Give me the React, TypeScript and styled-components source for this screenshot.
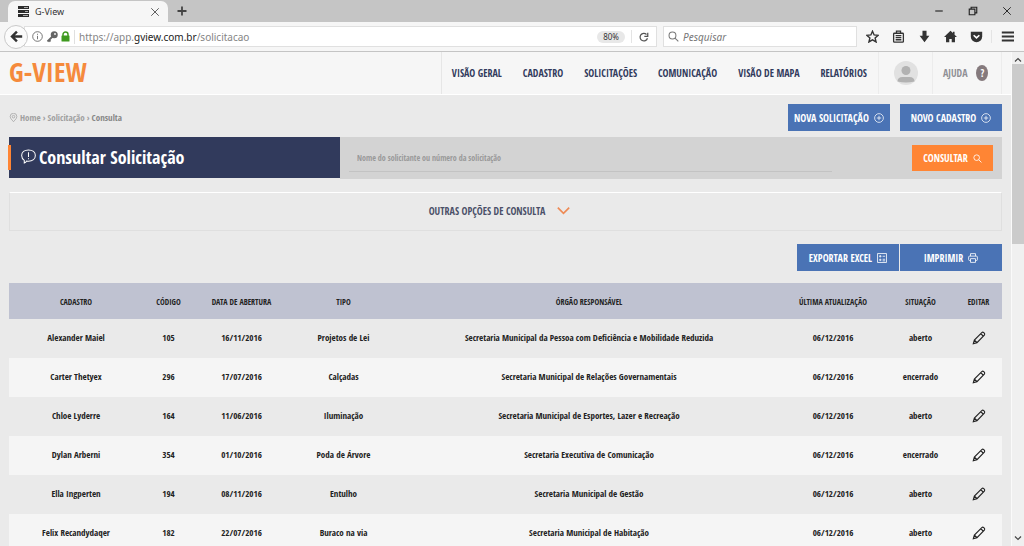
import React from 'react';
import styled, { createGlobalStyle } from 'styled-components';

const ui = '"Noto Sans", "Open Sans", sans-serif';
const body = '"Open Sans Condensed", "Open Sans", sans-serif';

const color = {
  navy: '#313a5c',
  blue: '#4a73b5',
  orange: '#ff8534',
  page: '#eaeaea',
  bar: '#f6f6f6',
};

const Global = createGlobalStyle`
  *, *::before, *::after { box-sizing: border-box; }
  body { margin: 0; background: ${color.page}; font-family: ${body}; }
  button, input { font-family: inherit; }
  button { border: 0; padding: 0; margin: 0; background: none; cursor: pointer; }
  a { color: inherit; text-decoration: none; }
  svg { display: block; flex: none; }
`;

const Window = styled.div`
  display: flex;
  flex-direction: column;
  height: 100vh;
  overflow: hidden;
`;

const TabStrip = styled.div`
  display: flex;
  flex: none;
  height: 22px;
  background: #c5c5c5;
  font-family: ${ui};
  padding-left: 8px;
`;

const Tab = styled.div`
  display: flex;
  align-items: center;
  width: 160px;
  margin-top: 1px;
  padding: 0 8px 0 10px;
  gap: 6px;
  border-radius: 7px 7px 0 0;
  background: ${color.bar};
  color: #333;
  font-size: 9px;
`;

const TabTitle = styled.span`
  flex: 1;
`;

const NewTab = styled.button`
  display: flex;
  align-items: center;
  margin-left: 8px;
`;

const WindowControls = styled.div`
  display: flex;
  align-items: center;
  gap: 24px;
  margin-left: auto;
  padding-right: 12px;
`;

const Toolbar = styled.div`
  display: flex;
  flex: none;
  align-items: center;
  height: 30px;
  padding: 0 10px 0 4px;
  background: ${color.bar};
  border-bottom: 1px solid #c4c4c4;
  font-family: ${ui};
`;

const Back = styled.button`
  display: grid;
  place-items: center;
  flex: none;
  width: 24px;
  height: 24px;
  border: 1px solid #c9c9c9;
  border-radius: 50%;
  background: #fbfbfb;
  z-index: 1;
`;

const AddressBar = styled.div`
  display: flex;
  flex: 1;
  align-items: center;
  height: 21px;
  margin-left: -4px;
  padding-left: 7px;
  gap: 3px;
  background: #fff;
  border: 1px solid #e0e0e0;
`;

const Address = styled.div`
  flex: 1;
  margin-left: 1px;
  padding-left: 4px;
  border-left: 1px solid #e0e0e0;
  color: #858585;
  font-size: 10px;
  line-height: 14px;

  b { color: #222; font-weight: 400; }
`;

const Zoom = styled.button`
  height: 12px;
  padding: 0 6px;
  border-radius: 6px;
  background: #e8e8e8;
  color: #333;
  font-size: 8px;
  line-height: 12px;
`;

const Reload = styled.button`
  display: grid;
  place-items: center;
  width: 25px;
  height: 13px;
  margin-left: 3px;
  border-left: 1px solid #e4e4e4;
`;

const BrowserSearch = styled.label`
  display: flex;
  align-items: center;
  width: 194px;
  height: 21px;
  margin-left: 6px;
  padding-left: 4px;
  gap: 4px;
  background: #fff;
  border: 1px solid #e0e0e0;

  input {
    flex: 1;
    min-width: 0;
    padding: 0;
    border: 0;
    outline: 0;
    background: none;
    font-size: 10px;
    font-style: italic;
  }
  input::placeholder { color: #777; opacity: 1; }
`;

const ToolIcons = styled.div`
  display: flex;
  align-items: center;
  justify-content: space-between;
  width: 117px;
  margin-left: 9px;
`;

const MenuButton = styled.button`
  margin-left: 8px;
  padding-left: 9px;
  border-left: 1px solid #e4e4e4;
`;

const Viewport = styled.div`
  display: flex;
  flex: 1;
  min-height: 0;
`;

const Page = styled.div`
  flex: 1;
  min-width: 0;
  overflow: hidden;
  background: ${color.page};
`;

const Scrollbar = styled.div`
  display: flex;
  flex-direction: column;
  align-items: center;
  justify-content: space-between;
  width: 13px;
  padding: 4px 0;
  background: #f0f0f0;
  border-left: 1px solid #fafafa;
`;

const Thumb = styled.div`
  width: 12px;
  height: 180px;
  margin: 0 0 auto;
  background: #cbcbcb;
`;

const Header = styled.header`
  display: flex;
  height: 43px;
  padding: 0 9px;
  background: ${color.bar};
  border-bottom: 1px solid #fff;
`;

const Logo = styled.a`
  margin-right: auto;
  color: #f58a3c;
  font-size: 27px;
  font-weight: 700;
  line-height: 40px;
`;

const Nav = styled.nav`
  display: flex;
  align-items: center;
  gap: 21px;
  padding: 0 11px 0 10px;
  border-left: 1px solid #e6e6e6;
  color: ${color.navy};
  font-size: 10px;
  font-weight: 700;
`;

const UserCell = styled.button`
  display: grid;
  place-items: center;
  width: 55px;
  border-left: 1px solid #ececec;
  border-right: 1px solid #ececec;
`;

const Help = styled.a`
  display: flex;
  align-items: center;
  gap: 9px;
  width: 69px;
  padding-left: 10px;
  border-right: 1px solid #ececec;
  color: #8f8f95;
  font-size: 10px;
  font-weight: 700;
`;

const HelpMark = styled.span`
  width: 12px;
  height: 16px;
  border-radius: 50%;
  background: #857a7d;
  color: #fff;
  line-height: 16px;
  text-align: center;
`;

const Content = styled.main`
  padding: 9px;
`;

const TopRow = styled.div`
  display: flex;
  align-items: center;
  justify-content: space-between;
`;

const Crumbs = styled.nav`
  display: flex;
  align-items: center;
  gap: 2px;
  color: #a0a0a0;
  font-size: 9px;

  b { color: #878787; }
`;

const Actions = styled.div<{ $gap: number }>`
  display: flex;
  justify-content: flex-end;
  gap: ${(p) => p.$gap}px;
`;

const Button = styled.button<{ $accent?: boolean }>`
  display: flex;
  align-items: center;
  justify-content: center;
  gap: 5px;
  width: ${(p) => (p.$accent ? 81 : 102)}px;
  height: ${(p) => (p.$accent ? 26 : 27)}px;
  background: ${(p) => (p.$accent ? color.orange : color.blue)};
  color: #fff;
  font-size: 10px;
  font-weight: 700;
  white-space: nowrap;
`;

const SearchRow = styled.section`
  display: grid;
  grid-template-columns: 1fr 2fr;
  margin-top: 6px;
`;

const Title = styled.h1`
  display: flex;
  align-items: center;
  gap: 3px;
  position: relative;
  height: 41px;
  margin: 0;
  padding: 0 0 2px 12px;
  background: ${color.navy};
  color: #fff;
  font-size: 18px;
  font-weight: 700;

  &::before {
    content: '';
    position: absolute;
    left: -1px;
    top: 8px;
    width: 3px;
    height: 25px;
    background: ${color.orange};
  }
`;

const SearchForm = styled.form`
  display: flex;
  align-items: center;
  justify-content: space-between;
  height: 42px;
  padding: 0 9px;
  background: #d3d3d3;

  input {
    width: 75%;
    height: 27px;
    padding: 0 8px;
    border: 0;
    border-bottom: 1px solid #c3c3c3;
    outline: 0;
    background: none;
    font-size: 8px;
  }
  input::placeholder { color: #999; opacity: 1; }
`;

const MoreOptions = styled.button`
  display: flex;
  align-items: center;
  justify-content: center;
  gap: 12px;
  width: 100%;
  height: 39px;
  margin: 13px 0;
  padding: 0 12px 2px 0;
  border: 1px solid #dfdfdf;
  border-top-color: #fff;
  color: #4b5068;
  font-size: 10px;
  font-weight: 700;
`;

const Table = styled.table`
  width: 100%;
  margin-top: 12px;
  border-collapse: collapse;
  table-layout: fixed;
  color: #222;
  font-size: 9px;
  font-weight: 700;
  text-align: center;

  th, td { padding: 0; white-space: nowrap; }
  th {
    height: 36px;
    background: #bfc2d1;
    font-size: 8px;
  }
  td { height: 39px; padding-bottom: 2px; }
  tbody tr:nth-child(even) { background: #f5f5f5; }
`;

const Edit = styled.button`
  vertical-align: middle;
`;

type IconProps = { size?: number; w?: number; stroke?: string; children: React.ReactNode };
const Icon = ({ size = 12, w = 1, stroke = 'currentColor', children }: IconProps) => (
  <svg width={size} height={size} viewBox="0 0 16 16" fill="none" stroke={stroke} strokeWidth={w} aria-hidden="true">
    {children}
  </svg>
);

const Lens = ({ stroke, size = 12 }: { stroke?: string; size?: number }) => (
  <Icon size={size} w={1.5} stroke={stroke}><circle cx="6.5" cy="6.5" r="5" /><path d="M10.2 10.2 15 15" /></Icon>
);
const Plus = () => (
  <Icon size={10} w={1.2}><circle cx="8" cy="8" r="7" /><path d="M8 4.5v7M4.5 8h7" /></Icon>
);
const Sheet = () => (
  <Icon size={10} w={1.3}><rect x="1" y="1" width="14" height="14" /><path d="M3.2 5.2h4M5.2 3.2v4M9 5.2h4M3.2 11h4M5.2 9v4M9 10h4M9 12.5h4" /></Icon>
);
const Printer = () => (
  <Icon size={10} w={1.3}><path d="M4 5V1h8v4M4 12H2.5Q1 12 1 10.5V6.5Q1 5 2.5 5h11Q15 5 15 6.5v4q0 1.5-1.5 1.5H12M4 9h8v6H4z" /></Icon>
);
const Pencil = () => (
  <Icon size={14} w={1.3} stroke="#222">
    <path d="M1.5 14.5 2.7 10.3 11.2 1.8q1.1-.9 2.200.1l.6.6q1 1.100.1 2.200L5.700 13.300zM2.700 10.300l3 3M10 3l3 3" />
  </Icon>
);

const columns = [
  { title: 'CADASTRO', width: 134 },
  { title: 'CÓDIGO', width: 51 },
  { title: 'DATA DE ABERTURA', width: 95 },
  { title: 'TIPO', width: 109 },
  { title: 'ÓRGÃO RESPONSÁVEL' },
  { title: 'ÚLTIMA ATUALIZAÇÃO', width: 106 },
  { title: 'SITUAÇÃO', width: 69 },
  { title: 'EDITAR', width: 47 },
];

const rows = [
  ['Alexander Maiel', '105', '16/11/2016', 'Projetos de Lei', 'Secretaria Municipal da Pessoa com Deficiência e Mobilidade Reduzida', '06/12/2016', 'aberto'],
  ['Carter Thetyex', '296', '17/07/2016', 'Calçadas', 'Secretaria Municipal de Relações Governamentais', '06/12/2016', 'encerrado'],
  ['Chloe Lyderre', '164', '11/06/2016', 'Iluminação', 'Secretaria Municipal de Esportes, Lazer e Recreação', '06/12/2016', 'aberto'],
  ['Dylan Arberni', '354', '01/10/2016', 'Poda de Árvore', 'Secretaria Executiva de Comunicação', '06/12/2016', 'encerrado'],
  ['Ella Ingperten', '194', '08/11/2016', 'Entulho', 'Secretaria Municipal de Gestão', '06/12/2016', 'aberto'],
  ['Felix Recandydaqer', '182', '22/07/2016', 'Buraco na via', 'Secretaria Municipal de Habitação', '06/12/2016', 'aberto'],
];

const links = ['VISÃO GERAL', 'CADASTRO', 'SOLICITAÇÕES', 'COMUNICAÇÃO', 'VISÃO DE MAPA', 'RELATÓRIOS'];

export default function App() {
  return (
    <Window>
      <Global />
      <TabStrip>
        <Tab>
          <svg width="11" height="11" viewBox="0 0 11 11" aria-hidden="true">
            <path d="M0 0h11v3H0zM0 4h11v3H0zM0 8h11v3H0z" fill="#2b2b2b" />
            <path d="M6 1h4v1H6zM7 5h3v1H7zM5 9h5v1H5z" fill="#aaa" />
          </svg>
          <TabTitle>G-View</TabTitle>
          <button aria-label="Fechar aba"><Icon size={10} w={1.5} stroke="#555"><path d="m2 2 12 12M14 2 2 14" /></Icon></button>
        </Tab>
        <NewTab aria-label="Nova aba"><Icon size={12} w={2.4} stroke="#444"><path d="M8 2v12M2 8h12" /></Icon></NewTab>
        <WindowControls>
          <button aria-label="Minimizar"><Icon size={10} w={1.8} stroke="#222"><path d="M2 8h12" /></Icon></button>
          <button aria-label="Restaurar"><Icon size={10} w={1.8} stroke="#222"><path d="M2 5h9v9H2zM5 5V2h9v9h-3" /></Icon></button>
          <button aria-label="Fechar"><Icon size={10} w={1.5} stroke="#222"><path d="m2 2 12 12M14 2 2 14" /></Icon></button>
        </WindowControls>
      </TabStrip>

      <Toolbar>
        <Back aria-label="Voltar"><Icon size={13} w={3} stroke="#333"><path d="M15 8H3M8.5 2 2.5 8l6 6" /></Icon></Back>
        <AddressBar>
          <Icon size={11} w={1.3} stroke="#666"><circle cx="8" cy="8" r="7" /><path d="M8 7v5M8 4v1.5" /></Icon>
          <Icon size={12} w={2.4} stroke="#666"><circle cx="11" cy="5" r="3.5" fill="#666" /><path d="m9 7-7 7M4 12l2 2" /><circle cx="12" cy="4" r="1.2" fill="#fff" stroke="none" /></Icon>
          <svg width="9" height="11" viewBox="0 0 9 11" aria-hidden="true">
            <path d="M2 5V3.5a2.5 2.5 0 0 1 5 0V5" fill="none" stroke="#3f9a1f" strokeWidth="1.5" />
            <rect x=".5" y="4.5" width="8" height="6" rx=".5" fill="#3f9a1f" />
          </svg>
          <Address>https://app.<b>gview.com.br</b>/solicitacao</Address>
          <Zoom>80%</Zoom>
          <Reload aria-label="Recarregar"><Icon size={10} w={2} stroke="#555"><path d="M13.5 10A6 6 0 1 1 12 4M14 1v6H8.5" /></Icon></Reload>
        </AddressBar>
        <BrowserSearch>
          <Lens stroke="#777" size={11} />
          <input placeholder="Pesquisar" aria-label="Pesquisar" />
        </BrowserSearch>
        <ToolIcons>
          <button aria-label="Favoritar"><Icon size={13} w={1.7} stroke="#333"><path d="m8 1.5 2 4.6 5 .4-3.8 3.3 1.2 4.9L8 12.1l-4.400 2.600 1.200-4.900L1 6.500l5-.4z" /></Icon></button>
          <button aria-label="Lista"><Icon size={13} w={1.6} stroke="#333"><rect x="2" y="4" width="12" height="11" rx="1" /><path d="M5.5 4V1.5h5V4M4.5 7h7M4.500 9.500h7M4.500 12h7" /></Icon></button>
          <button aria-label="Downloads"><Icon size={13} stroke="none"><path d="M5.500 1h5v6H14l-6 8-6-8h3.500z" fill="#333" /></Icon></button>
          <button aria-label="Início"><Icon size={13} stroke="none"><path d="M8 1 0 8.500h2.500V15h4v-4h3v4h4V8.500H16L13 5.700V2h-2v1.800z" fill="#333" /></Icon></button>
          <button aria-label="Pocket"><Icon size={13} w={2}><path d="M1 2h14v6a7 7 0 0 1-14 0z" fill="#333" stroke="none" /><path d="m4.500 6.500 3.500 3.300 3.500-3.300" stroke="#fff" /></Icon></button>
        </ToolIcons>
        <MenuButton aria-label="Menu"><Icon size={13} w={2.6} stroke="#333"><path d="M1 3h15M1 8h15M1 13h15" /></Icon></MenuButton>
      </Toolbar>

      <Viewport>
        <Page>
          <Header>
            <Logo href="#">G-VIEW</Logo>
            <Nav>{links.map((l) => <a href="#" key={l}>{l}</a>)}</Nav>
            <UserCell aria-label="Usuário">
              <svg width="24" height="24" viewBox="0 0 24 24" aria-hidden="true">
                <circle cx="12" cy="12" r="12" fill="#e1e1e1" />
                <circle cx="12" cy="9.500" r="4.500" fill="#b2b2b2" />
                <path d="M3.500 20.500q0-4.500 5-4.500h7q5 0 5 4.500-8.500 2-17 0z" fill="#b2b2b2" />
              </svg>
            </UserCell>
            <Help href="#">AJUDA <HelpMark>?</HelpMark></Help>
          </Header>

          <Content>
            <TopRow>
              <Crumbs>
                <Icon size={9} w={1.3}><path d="M8 15.500Q2 9.500 2 6.500a6 6 0 0 1 12 0q0 3-6 9z" /><circle cx="8" cy="6.500" r="2.300" /></Icon>
                <a href="#">Home</a><span>›</span><a href="#">Solicitação</a><span>›</span><b>Consulta</b>
              </Crumbs>
              <Actions $gap={10}>
                <Button>NOVA SOLICITAÇÃO <Plus /></Button>
                <Button>NOVO CADASTRO <Plus /></Button>
              </Actions>
            </TopRow>

            <SearchRow>
              <Title>
                <Icon size={15} w={1.1}><path d="M3.500 15V12.200A6.300 6.300 0 0 1 .7 7C.7 3.500 3.700 1 8 1s7.300 2.500 7.300 6S12.300 13 8 13q-1 0-2-.2Q5 14.500 3.500 15zM8 3.500v5M8 9.800v1.200" /></Icon>
                Consultar Solicitação
              </Title>
              <SearchForm onSubmit={(e) => e.preventDefault()}>
                <input placeholder="Nome do solicitante ou número da solicitação" aria-label="Nome do solicitante ou número da solicitação" />
                <Button $accent type="submit">CONSULTAR <Lens size={9} /></Button>
              </SearchForm>
            </SearchRow>

            <MoreOptions>
              OUTRAS OPÇÕES DE CONSULTA
              <Icon size={13} w={2} stroke="#ee8a55"><path d="m1 4.500 7 7 7-7" /></Icon>
            </MoreOptions>

            <Actions $gap={1}>
              <Button>EXPORTAR EXCEL <Sheet /></Button>
              <Button>IMPRIMIR <Printer /></Button>
            </Actions>

            <Table>
              <colgroup>{columns.map((c) => <col key={c.title} width={c.width} />)}</colgroup>
              <thead><tr>{columns.map((c) => <th key={c.title} scope="col">{c.title}</th>)}</tr></thead>
              <tbody>
                {rows.map((r) => (
                  <tr key={r[0]}>
                    {r.map((v, i) => <td key={i}>{v}</td>)}
                    <td><Edit aria-label={`Editar ${r[0]}`}><Pencil /></Edit></td>
                  </tr>
                ))}
              </tbody>
            </Table>
          </Content>
        </Page>
        <Scrollbar aria-hidden="true">
          <Icon size={8} w={2.4} stroke="#444"><path d="m2 11 6-6 6 6" /></Icon>
          <Thumb />
          <Icon size={8} w={2.4} stroke="#444"><path d="m2 5 6 6 6-6" /></Icon>
        </Scrollbar>
      </Viewport>
    </Window>
  );
}
